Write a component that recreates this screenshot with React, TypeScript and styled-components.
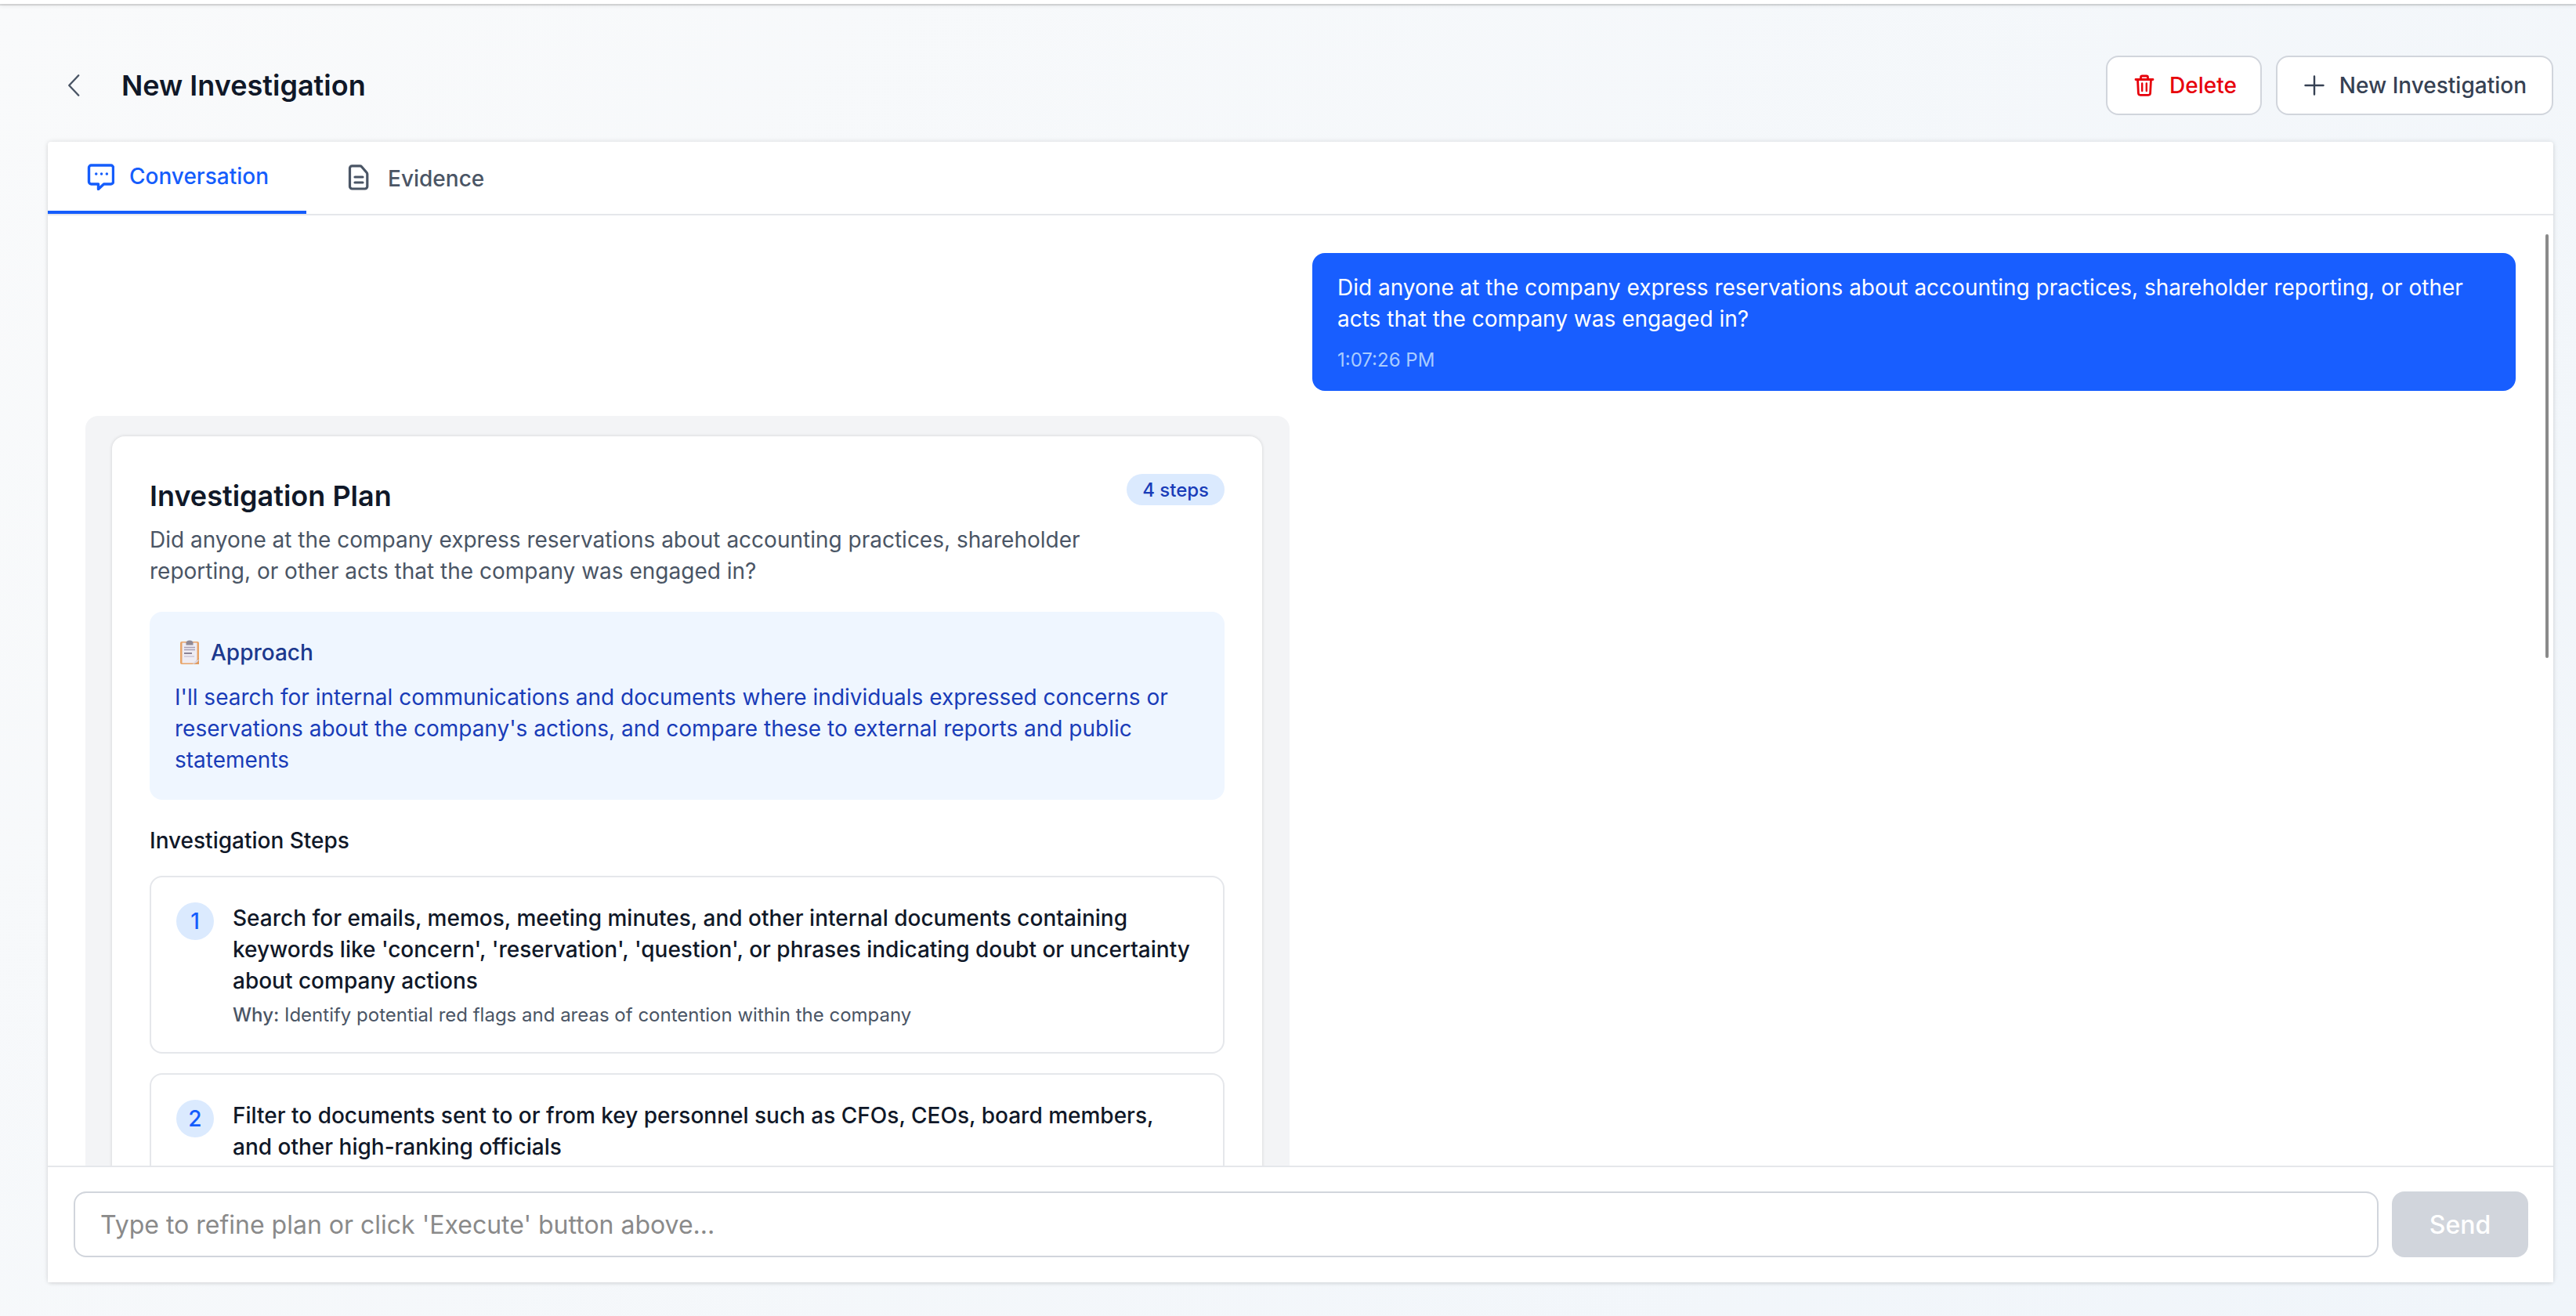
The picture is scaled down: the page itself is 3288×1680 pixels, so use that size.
import React from "react";
import styled, { createGlobalStyle } from "styled-components";

const Global = createGlobalStyle`
  html, body { margin: 0; padding: 0; }
  body { font-family: Inter, "Liberation Sans", sans-serif; }
  * { box-sizing: border-box; }
`;

const Page = styled.div`
  width: 3288px;
  height: 1680px;
  display: flex;
  flex-direction: column;
  overflow: hidden;
  background: linear-gradient(135deg, #f9fafb 0%, #f0f5fa 100%);
`;

const TopStrip = styled.div`
  flex: none;
  height: 5px;
  background: #fff;
  border-bottom: 0;
  box-shadow: 0 2px 1px rgba(0, 0, 0, 0.12), 0 3px 5px rgba(0, 0, 0, 0.06);
`;

const Content = styled.div`
  flex: 1;
  min-height: 0;
  display: flex;
  flex-direction: column;
  padding: 66px 29px 43px 61px;
`;

const Header = styled.header`
  flex: none;
  height: 76px;
  margin-bottom: 34px;
  display: flex;
  align-items: center;
  justify-content: space-between;
`;

const TitleGroup = styled.div`
  display: flex;
  align-items: center;
  gap: 42px;
  padding-left: 16px;
`;

const BackIcon = styled.svg`
  width: 36px;
  height: 36px;
  color: #4a5565;
  flex: none;
`;

const PageTitle = styled.h1`
  margin: 0;
  font-size: 36px;
  line-height: 48px;
  font-weight: 600;
  color: #101828;
`;

const Actions = styled.div`
  display: flex;
  gap: 18px;
`;

const ActionButton = styled.button<{ $danger?: boolean }>`
  height: 76px;
  display: flex;
  align-items: center;
  gap: 18px;
  padding: 0 ${(p) => (p.$danger ? "30px" : "32px")} 0 33px;
  background: #fff;
  border: 2px solid #d1d5dc;
  border-radius: 16px;
  font-family: inherit;
  font-size: 28px;
  font-weight: 500;
  color: ${(p) => (p.$danger ? "#e7000b" : "#364153")};
`;

const Card = styled.main`
  position: relative;
  flex: 1;
  min-height: 0;
  display: flex;
  flex-direction: column;
  background: #fff;
  border-radius: 4px;
  box-shadow: 0 0 6px rgba(0, 0, 0, 0.12), 0 2px 4px rgba(0, 0, 0, 0.06);
`;

const TabBar = styled.nav`
  flex: none;
  height: 94px;
  display: flex;
  box-shadow: inset 0 -2px 0 #e5e7eb;
`;

const Tab = styled.div<{ $active?: boolean }>`
  display: flex;
  align-items: center;
  gap: 19px;
  padding: 0 48px 0 49px;
  font-size: 28px;
  font-weight: 500;
  color: ${(p) => (p.$active ? "#155dfc" : "#4a5565")};
  ${(p) => p.$active && "margin-bottom: 2px; border-bottom: 4px solid #155dfc;"}
`;

const TabIcon = styled.svg`
  width: 36px;
  height: 36px;
  flex: none;
`;

const Messages = styled.section`
  position: relative;
  flex: 1;
  min-height: 0;
  overflow: hidden;
  display: flex;
  flex-direction: column;
  padding: 48px 48px 0;
`;

const ScrollThumb = styled.div`
  position: absolute;
  top: 24px;
  right: 6px;
  width: 4px;
  height: 541px;
  border-radius: 2px;
  background: #8a8a8a;
`;

const UserBubble = styled.div`
  flex: none;
  align-self: flex-end;
  width: 1536px;
  padding: 24px 32px 23px;
  background: #185eff;
  border-radius: 16px;
  color: #fff;
  font-size: 28px;
  line-height: 40px;
`;

const BubbleTime = styled.div`
  margin-top: 17px;
  font-size: 24px;
  line-height: 32px;
  color: #a9ccff;
`;

const PlanShell = styled.div`
  flex: none;
  align-self: flex-start;
  width: 1537px;
  margin-top: 32px;
  padding: 26px 35px 32px 34px;
  background: #f3f4f6;
  border-radius: 16px;
`;

const PlanCard = styled.article`
  padding: 40px 48px 48px;
  background: #fff;
  border-radius: 16px;
  box-shadow: 0 0 4px rgba(0, 0, 0, 0.14);
`;

const PlanHead = styled.div`
  display: flex;
  align-items: flex-start;
  justify-content: space-between;
  margin-bottom: 12px;
`;

const PlanTitle = styled.h2`
  margin: 0;
  padding-top: 12px;
  font-size: 36px;
  line-height: 48px;
  font-weight: 600;
  color: #101828;
`;

const Badge = styled.span`
  margin-top: 8px;
  height: 40px;
  padding: 0 20px;
  display: flex;
  align-items: center;
  border-radius: 20px;
  background: #dbeafe;
  color: #193cb8;
  font-size: 24px;
  font-weight: 500;
`;

const PlanQuestion = styled.p`
  margin: 0 0 32px;
  max-width: 1250px;
  font-size: 28px;
  line-height: 40px;
  color: #4a5565;
`;

const ApproachBox = styled.div`
  padding: 32px 32px 31px;
  background: #eff6ff;
  border-radius: 16px;
`;

const ApproachTitle = styled.div`
  display: flex;
  align-items: center;
  gap: 14px;
  font-size: 28px;
  line-height: 40px;
  font-weight: 500;
  color: #1c398e;
  margin-bottom: 17px;
`;

const EmojiIcon = styled.svg`
  width: 26px;
  height: 32px;
  margin-left: 6px;
  flex: none;
`;

const ApproachBody = styled.p`
  margin: 0;
  font-size: 28px;
  line-height: 40px;
  color: #193cb8;
`;

const StepsHeading = styled.h3`
  margin: 32px 0 25px;
  font-size: 28px;
  line-height: 40px;
  font-weight: 500;
  color: #101828;
`;

const StepCard = styled.div`
  display: flex;
  gap: 24px;
  padding: 32px 32px 31px;
  margin-bottom: 25px;
  background: #fff;
  border: 2px solid #e5e7eb;
  border-radius: 16px;
`;

const StepNumber = styled.div`
  flex: none;
  width: 48px;
  height: 48px;
  display: flex;
  align-items: center;
  justify-content: center;
  border-radius: 50%;
  background: #dbeafe;
  color: #155dfc;
  font-size: 28px;
  font-weight: 500;
`;

const StepBody = styled.div`
  min-width: 0;
`;

const StepText = styled.div`
  font-size: 28px;
  line-height: 40px;
  font-weight: 500;
  color: #101828;
`;

const StepWhy = styled.div`
  margin-top: 8px;
  font-size: 24px;
  line-height: 32px;
  color: #4a5565;
  b {
    font-weight: 500;
  }
`;

const Composer = styled.footer`
  flex: none;
  display: flex;
  gap: 17px;
  padding: 31px 32px 32px 33px;
  border-top: 2px solid #e5e7eb;
  background: #fff;
`;

const Field = styled.input`
  flex: 1;
  min-width: 0;
  height: 84px;
  padding: 0 32px;
  background: #fff;
  border: 2px solid #d1d5dc;
  border-radius: 16px;
  outline: none;
  font-family: inherit;
  font-size: 32px;
  color: #101828;
  &::placeholder {
    color: #8a8a8a;
    opacity: 1;
  }
`;

const SendButton = styled.button`
  flex: none;
  width: 174px;
  height: 84px;
  background: #d1d5dc;
  border: 0;
  border-radius: 16px;
  font-family: inherit;
  font-size: 32px;
  font-weight: 500;
  color: #fff;
`;

const steps: { n: number; text: string; why?: string }[] = [
  {
    n: 1,
    text: "Search for emails, memos, meeting minutes, and other internal documents containing keywords like 'concern', 'reservation', 'question', or phrases indicating doubt or uncertainty about company actions",
    why: "Identify potential red flags and areas of contention within the company",
  },
  {
    n: 2,
    text: "Filter to documents sent to or from key personnel such as CFOs, CEOs, board members, and other high-ranking officials",
  },
];

export default function App() {
  return (
    <Page>
      <Global />
      <TopStrip />
      <Content>
        <Header>
          <TitleGroup>
            <BackIcon viewBox="0 0 24 24" fill="none" stroke="currentColor" strokeWidth="1.6" strokeLinecap="round" strokeLinejoin="round">
              <path d="M15.5 3.500 7.500 12l8 8.500" />
            </BackIcon>
            <PageTitle>New Investigation</PageTitle>
          </TitleGroup>
          <Actions>
            <ActionButton $danger>
              <svg width="28" height="28" viewBox="0 0 28 28" fill="none" stroke="currentColor" strokeWidth="2.800" strokeLinecap="round" strokeLinejoin="round">
                <path d="M3 6.500h22M9.500 6V3.800c0-1 .8-1.800 1.800-1.800h5.400c1 0 1.800.8 1.800 1.800V6M5.500 6.500l.9 17.500c.1 1.300 1.100 2.300 2.400 2.300h10.400c1.300 0 2.300-1 2.400-2.300l.9-17.500" />
                <path d="M11.200 11.500v9.500M16.800 11.500v9.500" strokeWidth="2.400" />
              </svg>
              Delete
            </ActionButton>
            <ActionButton>
              <svg width="28" height="28" viewBox="0 0 28 28" fill="none" stroke="currentColor" strokeWidth="2.400" strokeLinecap="round">
                <path d="M14 2.500v23M2.500 14h23" />
              </svg>
              New Investigation
            </ActionButton>
          </Actions>
        </Header>
        <Card>
          <TabBar>
            <Tab $active>
              <TabIcon viewBox="0 0 36 36" fill="none" stroke="currentColor" strokeWidth="3.400" strokeLinejoin="round" strokeLinecap="round">
                <path d="M6.500 4h25a3 3 0 0 1 3 3v18a3 3 0 0 1-3 3h-9l-7 6.500V28h-9a3 3 0 0 1-3-3V7a3 3 0 0 1 3-3Z" />
                <path d="M12.700 15h.1M19.500 15h.1M26.300 15h.1" strokeWidth="3.400" />
              </TabIcon>
              Conversation
            </Tab>
            <Tab>
              <TabIcon viewBox="0 0 36 36" fill="none" stroke="currentColor" strokeWidth="3.200" strokeLinejoin="round" strokeLinecap="round">
                <path d="M9.500 1.800h10c.8 0 1.500.3 2 .9l6.500 7.500c.5.6.8 1.200.8 2V28c0 1.700-1.300 3-3 3H9.500c-1.700 0-3-1.300-3-3V4.800c0-1.700 1.300-3 3-3Z" />
                <path d="M13 16h10M13 23h10" />
              </TabIcon>
              Evidence
            </Tab>
          </TabBar>
          <Messages>
            <ScrollThumb />
            <UserBubble>
              Did anyone at the company express reservations about accounting practices, shareholder reporting, or other acts that the company was engaged in?
              <BubbleTime>1:07:26 PM</BubbleTime>
            </UserBubble>
            <PlanShell>
              <PlanCard>
                <PlanHead>
                  <PlanTitle>Investigation Plan</PlanTitle>
                  <Badge>4 steps</Badge>
                </PlanHead>
                <PlanQuestion>
                  Did anyone at the company express reservations about accounting practices, shareholder reporting, or other acts that the company was engaged in?
                </PlanQuestion>
                <ApproachBox>
                  <ApproachTitle>
                    <EmojiIcon viewBox="0 0 26 32">
                      <rect x="1" y="2" width="24" height="29" rx="2" fill="#e8a468" />
                      <rect x="3.500" y="3.500" width="19" height="26" fill="#eeecf3" />
                      <path d="M8.500 3.500c0-1.500 1.500-3 4.500-3s4.500 1.500 4.500 3V6.500h-9Z" fill="#8f8a96" />
                      <path d="M6 9.500h14M6 12.500h14" stroke="#a79fb5" strokeWidth="1.400" />
                      <path d="M6 17h10" stroke="#8b8496" strokeWidth="2" />
                      <path d="M6 21h13" stroke="#c9c4d4" strokeWidth="1.400" />
                      <path d="M25 23v8h-8Z" fill="#e09a5f" />
                      <path d="M17 31c1-3 4-5 8-6-1 3-4 5-8 6Z" fill="#dcd9e2" />
                    </EmojiIcon>
                    Approach
                  </ApproachTitle>
                  <ApproachBody>
                    I'll search for internal communications and documents where individuals expressed concerns or reservations about the company's actions, and compare these to external reports and public statements
                  </ApproachBody>
                </ApproachBox>
                <StepsHeading>Investigation Steps</StepsHeading>
                {steps.map((s) => (
                  <StepCard key={s.n}>
                    <StepNumber>{s.n}</StepNumber>
                    <StepBody>
                      <StepText>{s.text}</StepText>
                      {s.why && (
                        <StepWhy>
                          <b>Why:</b> {s.why}
                        </StepWhy>
                      )}
                    </StepBody>
                  </StepCard>
                ))}
              </PlanCard>
            </PlanShell>
          </Messages>
          <Composer>
            <Field placeholder="Type to refine plan or click 'Execute' button above..." />
            <SendButton>Send</SendButton>
          </Composer>
        </Card>
      </Content>
    </Page>
  );
}
